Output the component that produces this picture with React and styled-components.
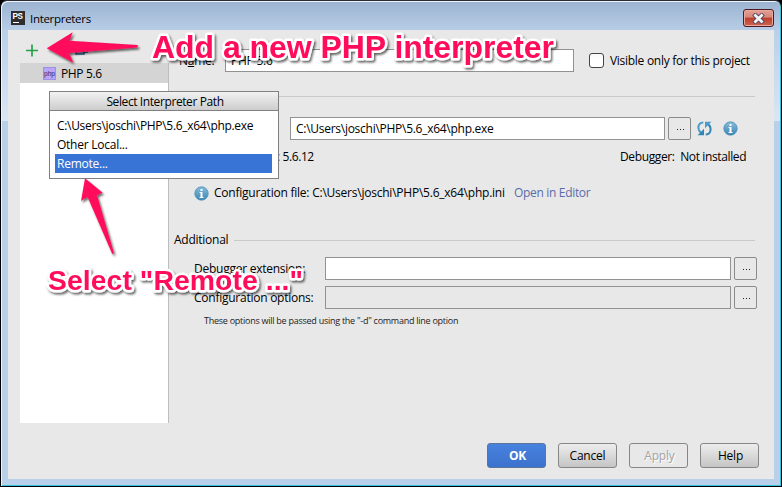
import React from "react";
import styled, { createGlobalStyle, css } from "styled-components";

const GlobalStyle = createGlobalStyle`
  * { box-sizing: border-box; }
  html, body { margin: 0; padding: 0; overflow: hidden; }
  body {
    background: #000;
    font-family: "Open Sans", "Noto Sans", sans-serif;
    font-size: 12px;
    color: #000;
  }
`;

const Window = styled.div`
  position: relative;
  width: 782px;
  height: 487px;
  padding-right: 6px;
  display: flex;
  flex-direction: column;
  overflow: hidden;
  border: 1px solid #000;
  border-top-color: #2a2a33;
  border-radius: 7px 7px 0 0;
  box-shadow: inset 1px 1px 0 #eef5fc, inset -1px -1px 0 #35c3e0;
  background:
    linear-gradient(#9bb3d0, #b7cde7) 0 0 / 100% 29px no-repeat,
    linear-gradient(#b9d0ea, #d9e6f4) 0 29px / 100% 91px no-repeat,
    #b9d0ea;
`;

const TitleBar = styled.header`
  flex: none;
  height: 29px;
  display: flex;
  align-items: center;
  padding: 5px 0 0 10px;
`;

const Text = styled.span`
  flex: none;
  white-space: pre;
  line-height: 16px;
  font-size: ${(p) => p.$size || 12}px;
  letter-spacing: ${(p) => p.$track ?? -0.25}px;
  color: ${(p) => p.$color || "inherit"};
`;

const TitleText = styled(Text)`
  margin-left: 5px;
  padding-top: 1px;
  flex: 1;
`;

const CloseButton = styled.button`
  width: 31px;
  height: 18px;
  margin: 0 1px 0 0;
  padding: 0;
  display: flex;
  align-items: center;
  justify-content: center;
  border: 1px solid #4c1a22;
  border-radius: 3px;
  box-shadow: inset 0 0 0 1px #e9a79d;
  background: linear-gradient(#e3a195 0, #d6877a 45%, #bc3e2c 50%, #cf6350 100%);
`;

const Content = styled.main`
  flex: none;
  width: 766px;
  height: 449px;
  margin-left: 7px;
  display: grid;
  grid-template-columns: 149px 1fr;
  grid-template-rows: 393px 1fr;
  padding-left: 12px;
  background: #e8e8e8;
`;

const Sidebar = styled.aside`
  display: flex;
  flex-direction: column;
`;

const Toolbar = styled.div`
  height: 33px;
  display: flex;
  align-items: center;
  padding: 6px 0 0 5px;
  gap: 36px;
`;

const Tree = styled.div`
  flex: 1;
  background: #fff;
  border-right: 1px solid #bdbdbd;
`;

const TreeRow = styled.div`
  height: 20px;
  display: flex;
  align-items: center;
  gap: 5px;
  padding: 1px 0 0 23px;
  background: #d4d4d4;
`;

const Form = styled.section`
  display: flex;
  flex-direction: column;
`;

const Row = styled.div`
  flex: none;
  display: flex;
  align-items: center;
  height: ${(p) => p.$h || 23}px;
  margin-top: ${(p) => p.$top || 0}px;
  padding-left: ${(p) => p.$left || 0}px;
`;

const Cell = styled.div`
  flex: none;
  display: flex;
  align-items: center;
  width: ${(p) => p.$w}px;
  padding-left: ${(p) => p.$pad || 0}px;
`;

const Field = styled.div`
  flex: none;
  display: flex;
  align-items: center;
  width: ${(p) => p.$w}px;
  height: 23px;
  padding-left: 5px;
  border: 1px solid #929292;
  background: ${(p) => (p.$disabled ? "#e8e8e8" : "#fff")};
`;

const Checkbox = styled.div`
  width: 15px;
  height: 15px;
  margin: 0 6px 0 15px;
  border: 1px solid #444;
  border-radius: 3px;
  background: linear-gradient(#f6f6f6, #fff 40%);
`;

const Rule = styled.div`
  height: 1px;
  width: ${(p) => p.$w}px;
  background: #c9c9c9;
`;

const BrowseButton = styled.button`
  flex: none;
  width: 23px;
  height: 23px;
  margin: 0 0 0 3px;
  padding: 1px 0 0 1px;
  display: flex;
  align-items: center;
  justify-content: center;
  gap: 2px;
  border: 1px solid #8b8b8b;
  border-radius: 2px;
  background: #e8e8e8;
  i { width: 1px; height: 1px; background: #222; }
`;

const Footer = styled.footer`
  grid-column: 1 / -1;
  display: flex;
  align-items: flex-start;
  justify-content: flex-end;
  gap: 12px;
  padding: 20px 15px 0 0;
`;

const variants = {
  primary: css`
    color: #fff;
    font-weight: 700;
    background: linear-gradient(#4782de, #3c72cd);
    border-color: #5d7599;
  `,
  disabled: css`
    color: #a3a3a3;
    text-shadow: 1px 1px 0 #fff;
    background: #e8e8e8;
  `,
  normal: css`
    color: #000;
    background: linear-gradient(#ededed, #c5c5c5);
  `,
};

const Button = styled.button`
  width: 59px;
  height: 25px;
  padding: 0 0 0 ${(p) => p.$shift || 0}px;
  border: 1px solid #868686;
  border-radius: 3px;
  font: inherit;
  letter-spacing: -0.2px;
  ${(p) => variants[p.$variant || "normal"]}
`;

const Popup = styled.div`
  position: absolute;
  left: 48px;
  top: 90px;
  width: 230px;
  height: 88px;
  border: 1px solid #808080;
  background: #fff;
`;

const PopupHeader = styled.div`
  height: 19px;
  display: flex;
  align-items: center;
  justify-content: center;
  padding: 1px 0 0 2px;
  border-bottom: 1px solid #808080;
  background: linear-gradient(#f2f2f2, #cdcdcd);
`;

const PopupList = styled.div`
  padding: 5px 6px 5px 5px;
`;

const PopupItem = styled.div`
  height: 19px;
  display: flex;
  align-items: center;
  padding-left: 2px;
  color: ${(p) => (p.$selected ? "#fff" : "#000")};
  background: ${(p) => (p.$selected ? "#3874d6" : "transparent")};
`;

const Callouts = styled.svg`
  position: absolute;
  left: -1px;
  top: -1px;
  pointer-events: none;
  font-family: "Liberation Sans", Arial, sans-serif;
  font-weight: 700;
`;

function PhpStormIcon() {
  return (
    <svg width="14" height="14" viewBox="0 0 14 14">
      <rect width="14" height="14" fill="#2f2d2e" />
      <text x="1.5" y="8.3" fontFamily="Liberation Sans" fontWeight="700" fontSize="8.2" fill="#fff" textLength="10.5">PS</text>
      <rect x="2" y="11" width="6" height="1" fill="#fff" />
    </svg>
  );
}

function CloseIcon() {
  return (
    <svg width="13" height="11" viewBox="0 0 13 11">
      <path d="M3.4 2.5L9.6 8.5M9.6 2.5L3.4 8.5" stroke="#5b4a60" strokeWidth="4.6" strokeLinecap="square" />
      <path d="M3.4 2.5L9.6 8.5M9.6 2.5L3.4 8.5" stroke="#f4f4f7" strokeWidth="2.7" strokeLinecap="square" />
    </svg>
  );
}

function PlusIcon() {
  return (
    <svg width="14" height="14" viewBox="0 0 14 14">
      <path d="M1 7.5H13M7 1.5V13.5" stroke="#24a148" strokeWidth="1.7" fill="none" />
    </svg>
  );
}

function CopyIcon() {
  return (
    <svg width="14" height="14" viewBox="0 0 14 14">
      <path d="M4.5 1.5H12.5V9.5H4.5Z" stroke="#3f6f9c" fill="#dfe9f2" />
      <path d="M1 5.5V11H9V5.5Z" stroke="#2b648f" strokeWidth="1.6" fill="#a8c6dc" />
    </svg>
  );
}

function PhpIcon() {
  return (
    <svg width="13" height="13" viewBox="0 0 13 13">
      <rect x="0.5" y="0.5" width="12" height="12" fill="#b8a6f8" stroke="#a08fe6" />
      <text x="1" y="8.6" fontFamily="Liberation Sans" fontSize="8" fill="#30246b" textLength="11" lengthAdjust="spacingAndGlyphs">php</text>
    </svg>
  );
}

function InfoIcon() {
  return (
    <svg width="15" height="15" viewBox="0 0 15 15">
      <defs>
        <linearGradient id="infoFill" x1="0" y1="0" x2="0" y2="1">
          <stop offset="0" stopColor="#86bcd9" />
          <stop offset="1" stopColor="#3c87b6" />
        </linearGradient>
      </defs>
      <circle cx="7.5" cy="7.5" r="6.7" fill="url(#infoFill)" stroke="#4d8fb8" strokeWidth="0.8" />
      <path d="M6.5 3H8.5V5H6.5ZM5.6 6H8.5V11H9.5V12H5.5V11H6.5V7H5.6Z" fill="#fff" />
    </svg>
  );
}

function RefreshIcon() {
  return (
    <svg width="15" height="15" viewBox="0 0 15 15" fill="none">
      <path d="M6.3 1.4C2.8 1.4 1.2 4.2 1.4 7C1.5 9 2.4 10.7 4 11.9" stroke="#4c9bc9" strokeWidth="2" />
      <path d="M7 7.8V14.3H0.6Z" fill="#3385b5" />
      <path d="M8.7 13.6C12.2 13.6 13.8 10.8 13.6 8C13.5 6 12.6 4.3 11 3.1" stroke="#3385b5" strokeWidth="2" />
      <path d="M8 7.2V0.7H14.4Z" fill="#4c9bc9" />
    </svg>
  );
}

const Browse = () => (
  <BrowseButton><i /><i /><i /></BrowseButton>
);

const outline = {
  fill: "#ff0f5b",
  stroke: "#fff",
  strokeWidth: 5,
  strokeLinejoin: "round",
  paintOrder: "stroke",
  filter: "url(#calloutShadow)",
};

export default function App() {
  return (
    <>
      <GlobalStyle />
      <Window>
        <TitleBar>
          <PhpStormIcon />
          <TitleText $track={-0.3} $size={11.5}>Interpreters</TitleText>
          <CloseButton><CloseIcon /></CloseButton>
        </TitleBar>
        <Content>
          <Sidebar>
            <Toolbar><PlusIcon /><CopyIcon /></Toolbar>
            <Tree>
              <TreeRow><PhpIcon /><Text $track={-0.35}>PHP 5.6</Text></TreeRow>
            </Tree>
          </Sidebar>
          <Form>
            <Row $top={19} $left={10}>
              <Cell $w={46}><Text>N<u>a</u>me:</Text></Cell>
              <Field $w={349}><Text>PHP 5.6</Text></Field>
              <Checkbox />
              <Text $track={-0.28}>Visible only for this project</Text>
            </Row>
            <Row $h={1} $top={24} $left={5}><Rule $w={581} /></Row>
            <Row $top={20} $left={25}>
              <Cell $w={96}><Text $track={-0.45}>PHP executable:</Text></Cell>
              <Field $w={375}><Text $track={-0.27}>C:\Users\joschi\PHP\5.6_x64\php.exe</Text></Field>
              <Browse />
              <Cell $w={32} $pad={6}><RefreshIcon /></Cell>
              <InfoIcon />
            </Row>
            <Row $h={16} $top={9} $left={25}>
              <Cell $w={83}><Text>PHP version</Text></Cell>
              <Cell $w={343}><Text $track={-0.4}>: 5.6.12</Text></Cell>
              <Text $track={-0.37}>Debugger:  Not installed</Text>
            </Row>
            <Row $h={16} $top={20} $left={25}>
              <Cell $w={20}><InfoIcon /></Cell>
              <Cell $w={300}><Text $track={-0.23}>Configuration file: C:\Users\joschi\PHP\5.6_x64\php.ini</Text></Cell>
              <Text $color="#5a6ca8" $track={-0.32}>Open in Editor</Text>
            </Row>
            <Row $h={16} $top={31} $left={5}>
              <Cell $w={60}><Text>Additional</Text></Cell>
              <Rule $w={521} />
            </Row>
            <Row $top={9} $left={25}>
              <Cell $w={131}><Text>Debugger extension:</Text></Cell>
              <Field $w={406} />
              <Browse />
            </Row>
            <Row $top={6} $left={25}>
              <Cell $w={131}><Text>Configuration options:</Text></Cell>
              <Field $w={406} $disabled />
              <Browse />
            </Row>
            <Row $h={16} $top={4} $left={35}>
              <Text $size={9} $track={-0.26} $color="#222">These options will be passed using the "-d" command line option</Text>
            </Row>
          </Form>
          <Footer>
            <Button $variant="primary" $shift={2}>OK</Button>
            <Button>Cancel</Button>
            <Button $variant="disabled" $shift={2}>Apply</Button>
            <Button $shift={2}>Help</Button>
          </Footer>
        </Content>
        <Popup>
          <PopupHeader><Text $track={-0.4}>Select Interpreter Path</Text></PopupHeader>
          <PopupList>
            <PopupItem><Text $track={-0.31}>C:\Users\joschi\PHP\5.6_x64\php.exe</Text></PopupItem>
            <PopupItem><Text>Other Local...</Text></PopupItem>
            <PopupItem $selected><Text>Remote...</Text></PopupItem>
          </PopupList>
        </Popup>
        <Callouts width="782" height="487" viewBox="0 0 782 487">
          <defs>
            <filter id="calloutShadow" x="-10%" y="-20%" width="120%" height="150%">
              <feDropShadow dx="1.5" dy="2" stdDeviation="1.2" floodColor="#000" floodOpacity="0.6" />
            </filter>
          </defs>
          <g fill="#ff0f5b" filter="url(#calloutShadow)">
            <path d="M46.7 48.3L72.7 32.3L69.5 40.7L137.7 45V47.5L69 53L73.3 62.7Z" />
            <path d="M85 178.3L102.7 192.7L97 195L114 253.3L112.3 254L87.5 196.7L81 201Z" />
          </g>
          <text x="152" y="58" fontSize="32" textLength="402" {...outline}>Add a new PHP interpreter</text>
          <text x="48" y="290" fontSize="28.4" textLength="255" {...outline}>Select "Remote ..."</text>
        </Callouts>
      </Window>
    </>
  );
}
